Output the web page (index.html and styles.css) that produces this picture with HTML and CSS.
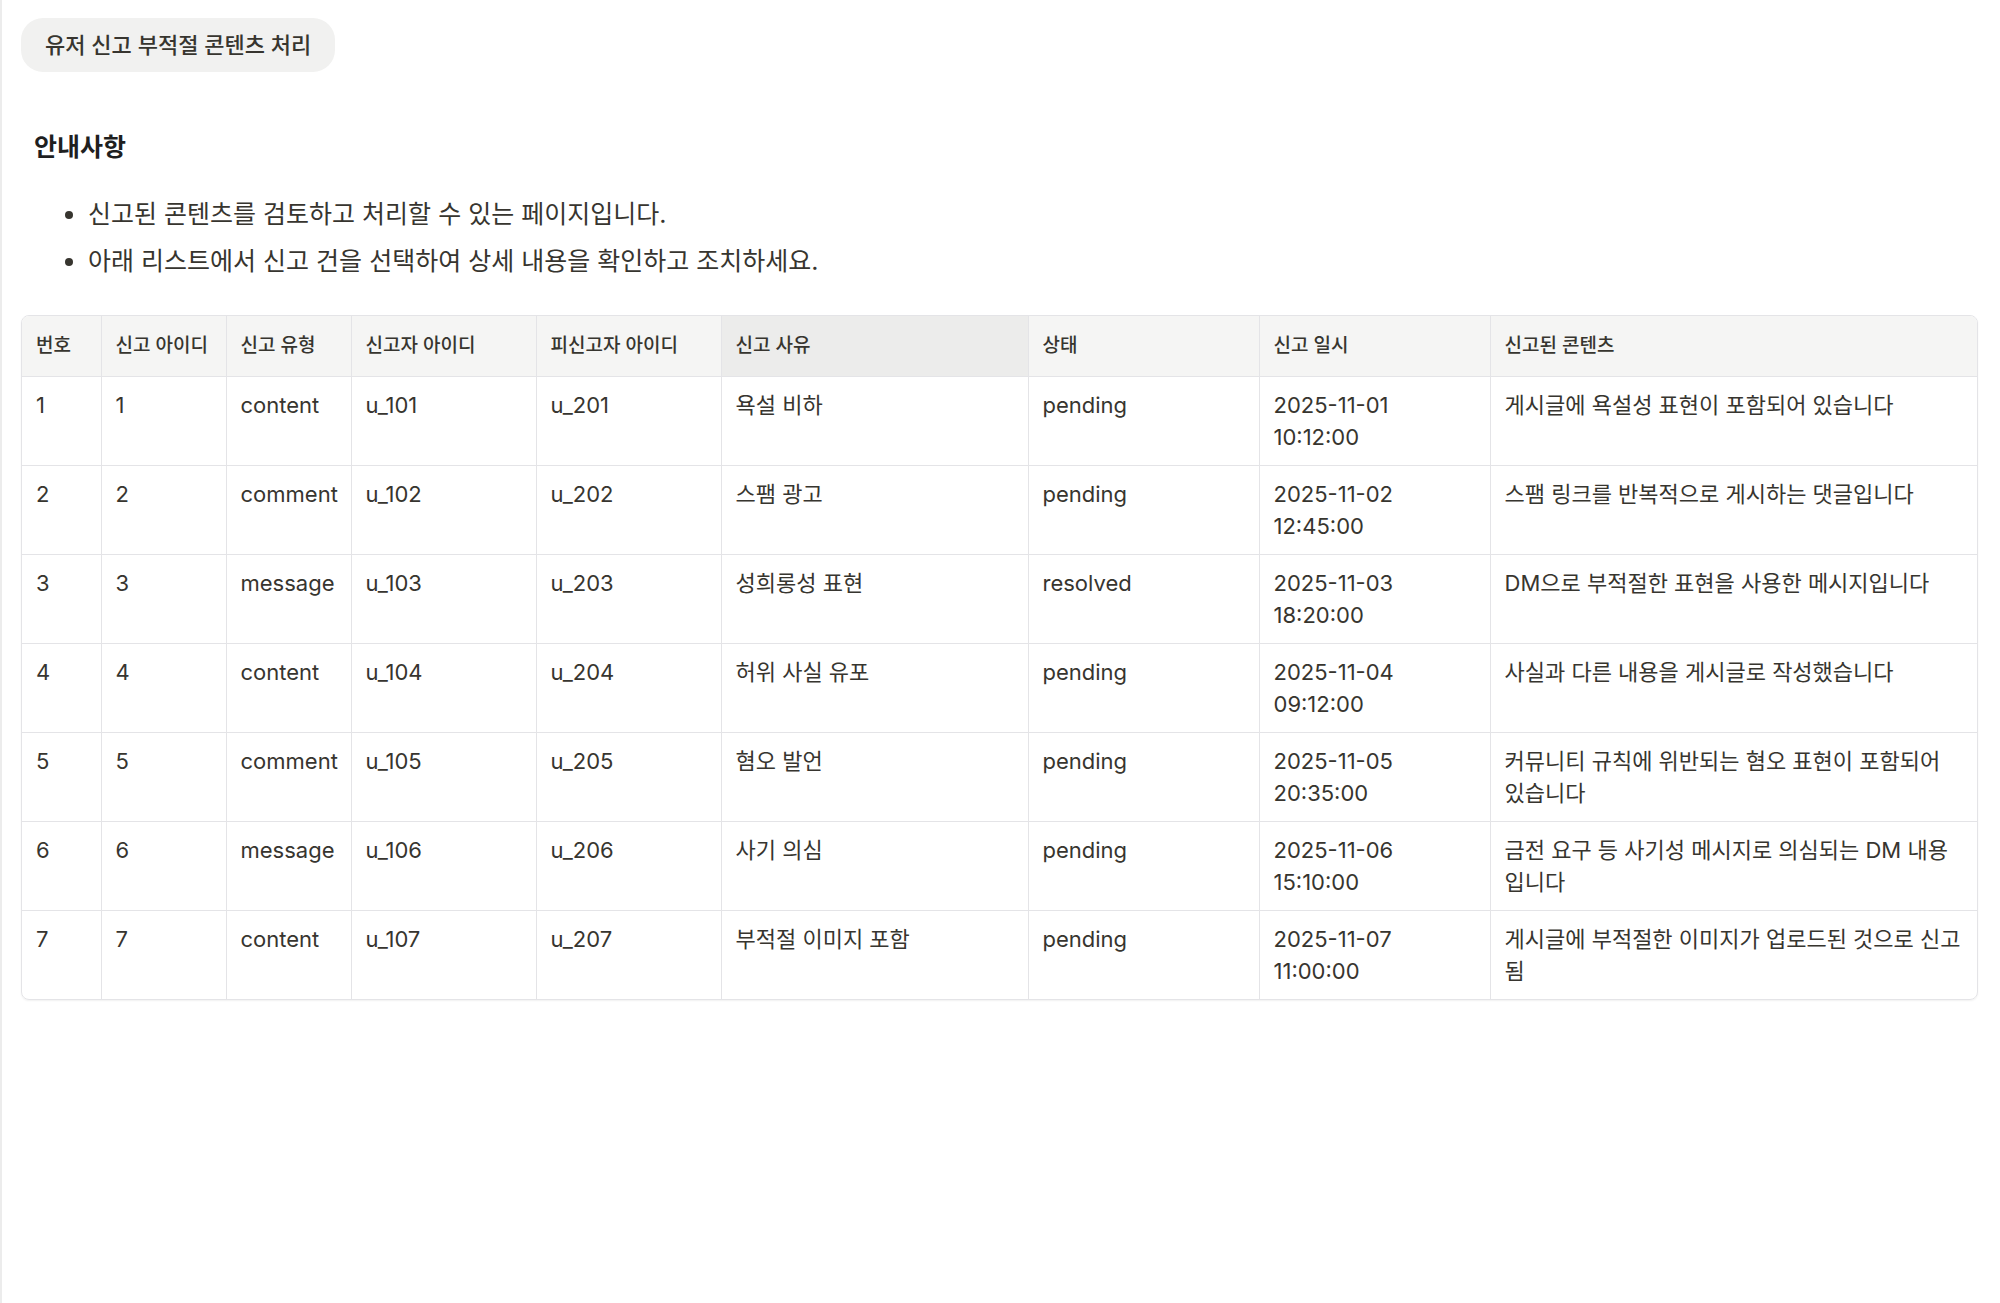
FILE: index.html
```html
<!DOCTYPE html>
<html lang="ko">
<head>
<meta charset="utf-8">
<title>유저 신고 부적절 콘텐츠 처리</title>
<link rel="stylesheet" href="styles.css">
</head>
<body>
<div class="page">
  <div class="pill">유저 신고 부적절 콘텐츠 처리</div>
  <section class="notice">
    <h2 class="notice-title">안내사항</h2>
    <ul class="notice-list">
      <li>신고된 콘텐츠를 검토하고 처리할 수 있는 페이지입니다.</li>
      <li>아래 리스트에서 신고 건을 선택하여 상세 내용을 확인하고 조치하세요.</li>
    </ul>
  </section>
  <div class="table-wrap">
    <table class="report-table">
      <colgroup>
        <col class="c-no"><col class="c-id"><col class="c-type"><col class="c-reporter"><col class="c-target"><col class="c-reason"><col class="c-status"><col class="c-date"><col class="c-content">
      </colgroup>
      <thead>
        <tr>
          <th>번호</th><th>신고 아이디</th><th>신고 유형</th><th>신고자 아이디</th><th>피신고자 아이디</th><th class="sorted">신고 사유</th><th>상태</th><th>신고 일시</th><th>신고된 콘텐츠</th>
        </tr>
      </thead>
      <tbody>
        <tr><td>1</td><td>1</td><td>content</td><td>u_101</td><td>u_201</td><td>욕설 비하</td><td>pending</td><td>2025-11-01<br>10:12:00</td><td>게시글에 욕설성 표현이 포함되어 있습니다</td></tr>
        <tr><td>2</td><td>2</td><td>comment</td><td>u_102</td><td>u_202</td><td>스팸 광고</td><td>pending</td><td>2025-11-02<br>12:45:00</td><td>스팸 링크를 반복적으로 게시하는 댓글입니다</td></tr>
        <tr><td>3</td><td>3</td><td>message</td><td>u_103</td><td>u_203</td><td>성희롱성 표현</td><td>resolved</td><td>2025-11-03<br>18:20:00</td><td>DM으로 부적절한 표현을 사용한 메시지입니다</td></tr>
        <tr><td>4</td><td>4</td><td>content</td><td>u_104</td><td>u_204</td><td>허위 사실 유포</td><td>pending</td><td>2025-11-04<br>09:12:00</td><td>사실과 다른 내용을 게시글로 작성했습니다</td></tr>
        <tr><td>5</td><td>5</td><td>comment</td><td>u_105</td><td>u_205</td><td>혐오 발언</td><td>pending</td><td>2025-11-05<br>20:35:00</td><td>커뮤니티 규칙에 위반되는 혐오 표현이 포함되어 있습니다</td></tr>
        <tr><td>6</td><td>6</td><td>message</td><td>u_106</td><td>u_206</td><td>사기 의심</td><td>pending</td><td>2025-11-06<br>15:10:00</td><td>금전 요구 등 사기성 메시지로 의심되는 DM 내용입니다</td></tr>
        <tr><td>7</td><td>7</td><td>content</td><td>u_107</td><td>u_207</td><td>부적절 이미지 포함</td><td>pending</td><td>2025-11-07<br>11:00:00</td><td>게시글에 부적절한 이미지가 업로드된 것으로 신고됨</td></tr>
      </tbody>
    </table>
  </div>
</div>
</body>
</html>
```

FILE: styles.css
```css
html, body {
  margin: 0;
  padding: 0;
  background: #ffffff;
}
body {
  font-family: Inter, "Noto Sans CJK KR", sans-serif;
  color: #37352f;
}
.page {
  min-height: 1303px;
  box-sizing: border-box;
  border-left: 2px solid #ececec;
  padding: 18px 22px 0 19px;
}
.pill {
  display: inline-block;
  background: #f1f1f0;
  border-radius: 22px;
  padding: 0 24px;
  height: 54px;
  line-height: 54px;
  font-size: 22px;
  font-weight: 500;
  color: #37352f;
}
.notice {
  padding-left: 13px;
  margin-top: 59px;
}
.notice-title {
  margin: 0;
  font-size: 25px;
  font-weight: 700;
  line-height: 32px;
  color: #1f1f1f;
}
.notice-list {
  margin: 28px 0 0;
  padding-left: 54px;
  font-size: 25px;
  line-height: 47px;
}
.table-wrap {
  margin-top: 30px;
  border: 1px solid #e4e4e7;
  border-radius: 8px;
  overflow: hidden;
  box-shadow: 0 1px 2px rgba(0,0,0,0.06);
}
.report-table {
  width: 100%;
  border-collapse: collapse;
  table-layout: fixed;
}
.c-no { width: 79px; }
.c-id { width: 125px; }
.c-type { width: 125px; }
.c-reporter { width: 185px; }
.c-target { width: 185px; }
.c-reason { width: 307px; }
.c-status { width: 231px; }
.c-date { width: 231px; }
.c-content { width: auto; }
.report-table th,
.report-table td {
  border-right: 1px solid #e4e4e7;
  border-bottom: 1px solid #e4e4e7;
  text-align: left;
  vertical-align: top;
  padding: 12px 8px 12px 14px;
}
.report-table th:last-child,
.report-table td:last-child {
  border-right: none;
  padding-right: 14px;
}
.report-table tbody tr:last-child td {
  border-bottom: none;
}
.report-table th {
  background: #f5f5f4;
  font-size: 19px;
  font-weight: 500;
  line-height: 36px;
  color: #37352f;
  vertical-align: middle;
  white-space: nowrap;
}
.report-table th.sorted {
  background: #ececeb;
}
.report-table td {
  font-size: 22px;
  line-height: 32px;
  height: 64px;
  color: #37352f;
}
```
